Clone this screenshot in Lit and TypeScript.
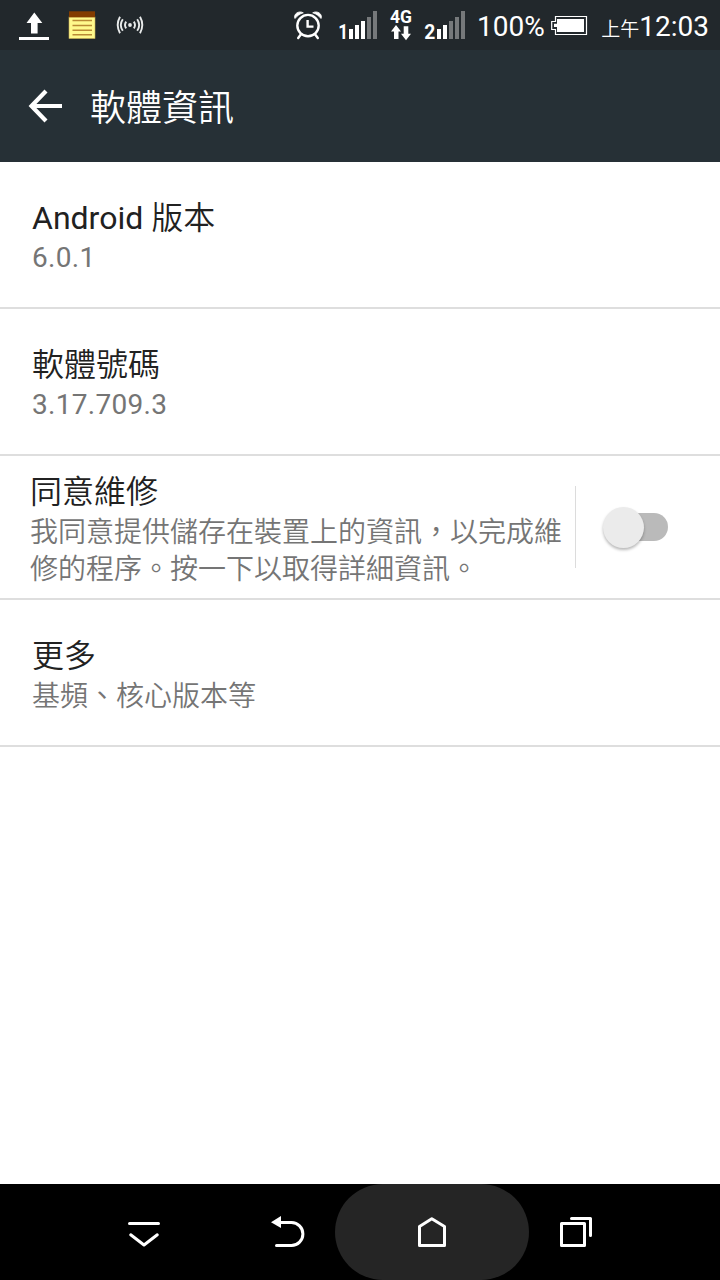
import { LitElement, html, css, svg } from "lit";
import { customElement, property } from "lit/decorators.js";

const FONT = css`Roboto, "Noto Sans CJK TC", sans-serif`;

/* Signal bars of rising height, the first `lit` of them bright. */
const bars = (x: number, lit: number) =>
  [29, 25, 21, 17, 11].map(
    (top, i) =>
      svg`<rect x=${x + i * 6} y=${top} width="4" height=${39 - top} fill=${i < lit ? "#fff" : "#76797b"}></rect>`
  );

@customElement("status-bar")
class StatusBar extends LitElement {
  static styles = css`
    :host {
      display: flex;
      height: 50px;
      background: #22282c;
      color: #fff;
      font-family: ${FONT};
    }
    svg {
      display: block;
      flex: none;
    }
    .glyph {
      font-family: Roboto, sans-serif;
      font-weight: 700;
      fill: #fff;
    }
    .pct,
    .time {
      font-size: 28px;
      line-height: 53px;
      white-space: nowrap;
    }
    .pct {
      width: 74px;
    }
    .time {
      flex: 1;
      display: flex;
      justify-content: flex-end;
      align-items: baseline;
      padding-right: 11px;
    }
    .ampm {
      font-size: 19px;
      font-weight: 350;
    }
  `;

  render() {
    return html`
      <svg width="290" height="50" viewBox="0 0 290 50">
        <path d="M34.3 12.5 42.3 23H37.6V33.6H31V23H26.500z" fill="#fff" />
        <rect x="19" y="37" width="30" height="3" fill="#fff" />
        <rect x="69" y="17" width="26" height="21.500" fill="#fff98c" stroke="#c9ad55" stroke-width=".6" />
        <rect x="69" y="11.300" width="26" height="6" fill="#833c00" />
        <path d="M72.500 20.500H92M72.500 25.400H92M72.500 30.200H92M72.500 34.800H92" stroke="#b98a35" stroke-width="1.500" />
        <g fill="none" stroke="#e8eaea" stroke-width="1.900">
          <circle cx="130" cy="25" r="1.900" fill="#e8eaea" stroke="none" />
          <path d="M126.200 21.600Q123.800 25 126.200 28.400M122.800 19.200Q118.800 25 122.800 30.800M120 16.800Q115.400 25 120 33.200" />
          <path d="M133.800 21.600Q136.200 25 133.800 28.400M137.200 19.200Q141.200 25 137.200 30.800M140 16.800Q144.600 25 140 33.200" />
        </g>
      </svg>
      <svg width="187" height="50" viewBox="290 0 187 50">
        <g fill="none" stroke="#fff" stroke-width="2.400">
          <circle cx="308" cy="25.600" r="10.700" />
          <path d="M307.600 20V26.600H313.500" />
          <path d="M300.800 34.500 298.200 38M315.200 34.500 317.800 38" stroke-linecap="round" />
        </g>
        <path d="M295 18.500C293 14.500 298.500 10 303.300 12.800C299.500 14 296.800 16.200 295 18.500zM321 18.500C323 14.500 317.500 10 312.700 12.800C316.500 14 319.200 16.200 321 18.500z" fill="#fff" stroke="#fff" stroke-width=".8" />
        <text class="glyph" transform="translate(338.300 39) scale(.82 1)" font-size="21">1</text>
        ${bars(349, 3)}
        <text class="glyph" x="390" y="23" font-size="17.500">4G</text>
        <path d="M396 25 401 31.500H398.500V39H394V31.500H391zM406 40.300 401 33.800H403.700V26.300H408.300V33.800H411z" fill="#fff" />
        <text class="glyph" transform="translate(424.300 39) scale(.92 1)" font-size="21">2</text>
        ${bars(437, 2)}
      </svg>
      <span class="pct">100%</span>
      <svg width="42" height="50" viewBox="551 0 42 50">
        <path d="M555.500 16.500H586.500V34.500H555.500V29.500H551.700V21.500H555.500z" fill="none" stroke="#fff" stroke-width="1.200" />
        <path d="M557 19H584V32H557V27H554V23.700H557z" fill="#fff" />
      </svg>
      <span class="time"><span class="ampm">上午</span><span>12:03</span></span>
    `;
  }
}

@customElement("setting-row")
class SettingRow extends LitElement {
  @property() name = "";
  @property() summary = "";

  static styles = css`
    :host {
      display: flex;
      align-items: center;
      box-sizing: border-box;
      height: 147px;
      padding: 0 32px;
      border-bottom: 2px solid #dedede;
      font-family: ${FONT};
    }
    :host([tall]) {
      height: 144px;
      padding-left: 30px;
    }
    .text {
      flex: 1;
      white-space: pre-line;
      padding-top: 3px;
    }
    .name {
      font-size: 32px;
      line-height: 44px;
      color: #212121;
    }
    .note {
      font-size: 28px;
      line-height: 37px;
      color: #757575;
    }
    :host([latin]) .note {
      letter-spacing: 0.3px;
      line-height: 36px;
    }
    .han {
      font-weight: 350;
    }
  `;

  /* Han text is set a little lighter than Latin text. */
  private run(text: string) {
    return text
      .split(/([ -~]+)/)
      .filter(Boolean)
      .map((part) => (/^[ -~]/.test(part) ? part : html`<span class="han">${part}</span>`));
  }

  render() {
    return html`<div class="text"><div class="name">${this.run(this.name)}</div><div class="note">${this.run(this.summary)}</div></div><slot></slot>`;
  }
}

@customElement("toggle-switch")
class ToggleSwitch extends LitElement {
  static styles = css`
    :host {
      display: flex;
      align-items: center;
      height: 82px;
      border-left: 1px solid #dcdcdc;
      padding: 0 20px 0 26px;
    }
    .track {
      display: flex;
      align-items: center;
      width: 56px;
      height: 28px;
      margin-left: 10px;
      border-radius: 14px;
      background: #bababa;
    }
    .thumb {
      flex: none;
      width: 41px;
      height: 41px;
      margin-left: -9px;
      border-radius: 50%;
      background: #ebebeb;
      box-shadow: 0 2px 3px rgba(0, 0, 0, 0.28);
    }
  `;
  render() {
    return html`<div class="track"><div class="thumb"></div></div>`;
  }
}

@customElement("app-root")
class AppRoot extends LitElement {
  static styles = css`
    :host {
      display: flex;
      flex-direction: column;
      height: 1280px;
      background: #fff;
      font-family: ${FONT};
    }
    header {
      display: flex;
      align-items: center;
      height: 112px;
      background: #263036;
      color: #fff;
    }
    .heading {
      font-size: 36px;
      font-weight: 350;
      line-height: 48px;
      padding-top: 6px;
    }
    main {
      flex: 1;
    }
    setting-row toggle-switch {
      flex: none;
      margin-right: -32px;
      width: 98px;
    }
    nav {
      display: flex;
      height: 96px;
      background: #000;
    }
    svg {
      display: block;
    }
    .nav-icon {
      fill: none;
      stroke: #fff;
      stroke-width: 3;
      stroke-linecap: round;
      stroke-linejoin: round;
    }
  `;

  render() {
    return html`
      <status-bar></status-bar>
      <header>
        <svg width="90" height="112" viewBox="0 50 90 112">
          <path d="M46 91 31.500 106 46 121M31 106H62" fill="none" stroke="#fff" stroke-width="4.200" />
        </svg>
        <span class="heading">軟體資訊</span>
      </header>
      <main>
        <setting-row latin name="Android 版本" summary="6.0.1"></setting-row>
        <setting-row latin name="軟體號碼" summary="3.17.709.3"></setting-row>
        <setting-row tall name="同意維修" .summary=${"我同意提供儲存在裝置上的資訊，以完成維\n修的程序。按一下以取得詳細資訊。"}>
          <toggle-switch></toggle-switch>
        </setting-row>
        <setting-row name="更多" summary="基頻、核心版本等"></setting-row>
      </main>
      <nav>
        <svg width="720" height="96" viewBox="0 1184 720 96">
          <rect x="335" y="1184" width="194" height="96" rx="48" fill="#252525" />
          <g class="nav-icon">
            <path d="M129.500 1223.500H158.500M130.700 1234.800 144 1245 157.300 1234.800" />
            <path d="M280 1222.500H291.500A11.400 11.500 0 0 1 291.500 1245.500H276.500" />
            <path d="M419.500 1226.500 431.800 1218.700 444.500 1226.500V1245.500H419.500z" />
            <path d="M561.500 1223.500H584.500V1245.500H561.500zM571.500 1218.500H590.500V1235.500" />
          </g>
          <path d="M271 1222.300 281 1216V1228z" fill="#fff" />
        </svg>
      </nav>
    `;
  }
}
